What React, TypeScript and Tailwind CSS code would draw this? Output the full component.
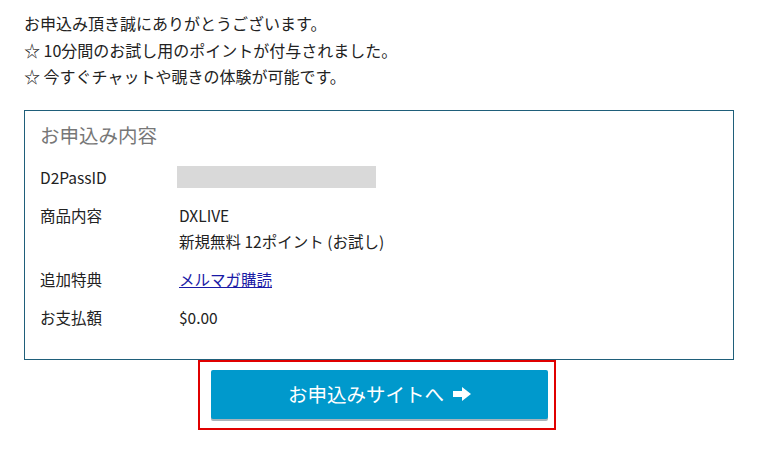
export default function App() {
  const rows = [
    { label: "D2PassID", value: <div className="h-[22px] w-[199px] bg-[#d9d9d9] mt-[2px] -ml-[2px]" /> },
    { label: "商品内容", value: <div>DXLIVE<br />新規無料 12ポイント (お試し)</div> },
    { label: "追加特典", value: <a href="#" className="text-[#1a1aa6] underline">メルマガ購読</a> },
    { label: "お支払額", value: <div>$0.00</div> },
  ];

  return (
    <div className="w-[778px] h-[456px] bg-white text-[#222] text-[15.5px] font-['Noto_Sans_CJK_JP',sans-serif]">
      <div className="px-[24px] pt-[10px] text-[16px] leading-[26.5px]">
        <p>お申込み頂き誠にありがとうございます。</p>
        <p>☆ 10分間のお試し用のポイントが付与されました。</p>
        <p>☆ 今すぐチャットや覗きの体験が可能です。</p>
      </div>

      {/* Order details */}
      <div className="ml-[24px] mt-[20px] w-[710px] h-[250px] border border-[#1f5f7a] pl-[15px] pt-[11px]">
        <h3 className="text-[19.5px] leading-[26px] text-[#777]">お申込み内容</h3>
        <div className="mt-[16px] flex flex-col gap-[12px] leading-[26px]">
          {rows.map((r) => (
            <div key={r.label} className="flex">
              <div className="w-[139px] shrink-0">{r.label}</div>
              <div>{r.value}</div>
            </div>
          ))}
        </div>
      </div>

      <div className="flex">
        <div className="ml-[198px] border-2 border-[#e00000] pl-[11px] pr-[6px] pt-[8px] pb-[9px]">
          <button className="w-[337px] h-[49px] rounded-[2px] bg-[#0099cc] text-white text-[19.5px] shadow-[0_2px_0_#a9b4bb] flex items-center justify-center gap-[9px]">
            <span>お申込みサイトへ</span>
            <svg width="18" height="14" viewBox="0 0 18 14" fill="white">
              <rect x="0" y="4" width="10" height="6" />
              <polygon points="9,0 18,7 9,14" />
            </svg>
          </button>
        </div>
      </div>
    </div>
  );
}
